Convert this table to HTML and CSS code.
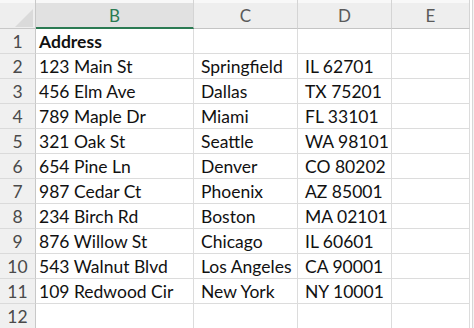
FILE: index.html
```html
<!DOCTYPE html>
<html>
<head>
<meta charset="utf-8">
<link rel="stylesheet" href="styles.css">
</head>
<body>
<div class="sheet">
  <div class="corner"><svg class="tri" width="36" height="29" viewBox="0 0 36 29"><polygon points="33,9 33,27 15,27" fill="#dadada"/></svg></div>
  <div class="colhead sel">B</div>
  <div class="colhead">C</div>
  <div class="colhead">D</div>
  <div class="colhead">E</div>

  <div class="rowhead">1</div><div class="cell first bold">Address</div><div class="cell"></div><div class="cell"></div><div class="cell"></div>
  <div class="rowhead">2</div><div class="cell first">123 Main St</div><div class="cell">Springfield</div><div class="cell">IL 62701</div><div class="cell"></div>
  <div class="rowhead">3</div><div class="cell first">456 Elm Ave</div><div class="cell">Dallas</div><div class="cell">TX 75201</div><div class="cell"></div>
  <div class="rowhead">4</div><div class="cell first">789 Maple Dr</div><div class="cell">Miami</div><div class="cell">FL 33101</div><div class="cell"></div>
  <div class="rowhead">5</div><div class="cell first">321 Oak St</div><div class="cell">Seattle</div><div class="cell">WA 98101</div><div class="cell"></div>
  <div class="rowhead">6</div><div class="cell first">654 Pine Ln</div><div class="cell">Denver</div><div class="cell">CO 80202</div><div class="cell"></div>
  <div class="rowhead">7</div><div class="cell first">987 Cedar Ct</div><div class="cell">Phoenix</div><div class="cell">AZ 85001</div><div class="cell"></div>
  <div class="rowhead">8</div><div class="cell first">234 Birch Rd</div><div class="cell">Boston</div><div class="cell">MA 02101</div><div class="cell"></div>
  <div class="rowhead">9</div><div class="cell first">876 Willow St</div><div class="cell">Chicago</div><div class="cell">IL 60601</div><div class="cell"></div>
  <div class="rowhead">10</div><div class="cell first">543 Walnut Blvd</div><div class="cell">Los Angeles</div><div class="cell">CA 90001</div><div class="cell"></div>
  <div class="rowhead">11</div><div class="cell first">109 Redwood Cir</div><div class="cell">New York</div><div class="cell">NY 10001</div><div class="cell"></div>
  <div class="rowhead">12</div><div class="cell first"></div><div class="cell"></div><div class="cell"></div><div class="cell"></div>
</div>
</body>
</html>
```
FILE: styles.css
```css
html, body {
  margin: 0;
  padding: 0;
  background: #f4f4f4;
  overflow: hidden;
}
.sheet {
  display: grid;
  grid-template-columns: 36px 158px 104px 94px 78px;
  grid-template-rows: 29px repeat(12, 25px);
  width: 472px;
  background: #ffffff;
  border-right: 1px solid #d6d6d6;
  font-family: Lato, "Liberation Sans", sans-serif;
  color: #111;
}
.corner {
  background: linear-gradient(#f8f8f8 0 3px, #eeeeee 3px);
  border-right: 1px solid #c8c8c8;
  border-bottom: 1px solid #c8c8c8;
  position: relative;
}
.tri {
  position: absolute;
  left: 0;
  top: 0;
}
.colhead {
  background: linear-gradient(#f8f8f8 0 3px, #eeeeee 3px);
  border-right: 1px solid #d4d4d4;
  border-bottom: 1px solid #c4c4c4;
  color: #5a5a5a;
  font-size: 17px;
  display: flex;
  align-items: center;
  justify-content: center;
  padding-top: 3px;
}
.colhead.sel {
  background: linear-gradient(#f8f8f8 0 3px, #e1e1e1 3px);
  color: #2b7a52;
  border-bottom: 2px solid #2b7a52;
  padding-top: 4px;
}
.rowhead {
  background: #f0f0f0;
  border-right: 1px solid #c8c8c8;
  border-bottom: 1px solid #dadada;
  color: #4a4a4a;
  font-size: 17.5px;
  display: flex;
  align-items: center;
  justify-content: center;
  padding-top: 1px;
}
.cell {
  border-right: 1px solid #dcdcdc;
  border-bottom: 1px solid #dcdcdc;
  font-size: 17.5px;
  display: flex;
  align-items: center;
  padding-left: 7px;
  padding-top: 1px;
  white-space: nowrap;
  overflow: hidden;
}
.cell.first {
  padding-left: 3px;
}
.bold {
  font-weight: bold;
}
```
